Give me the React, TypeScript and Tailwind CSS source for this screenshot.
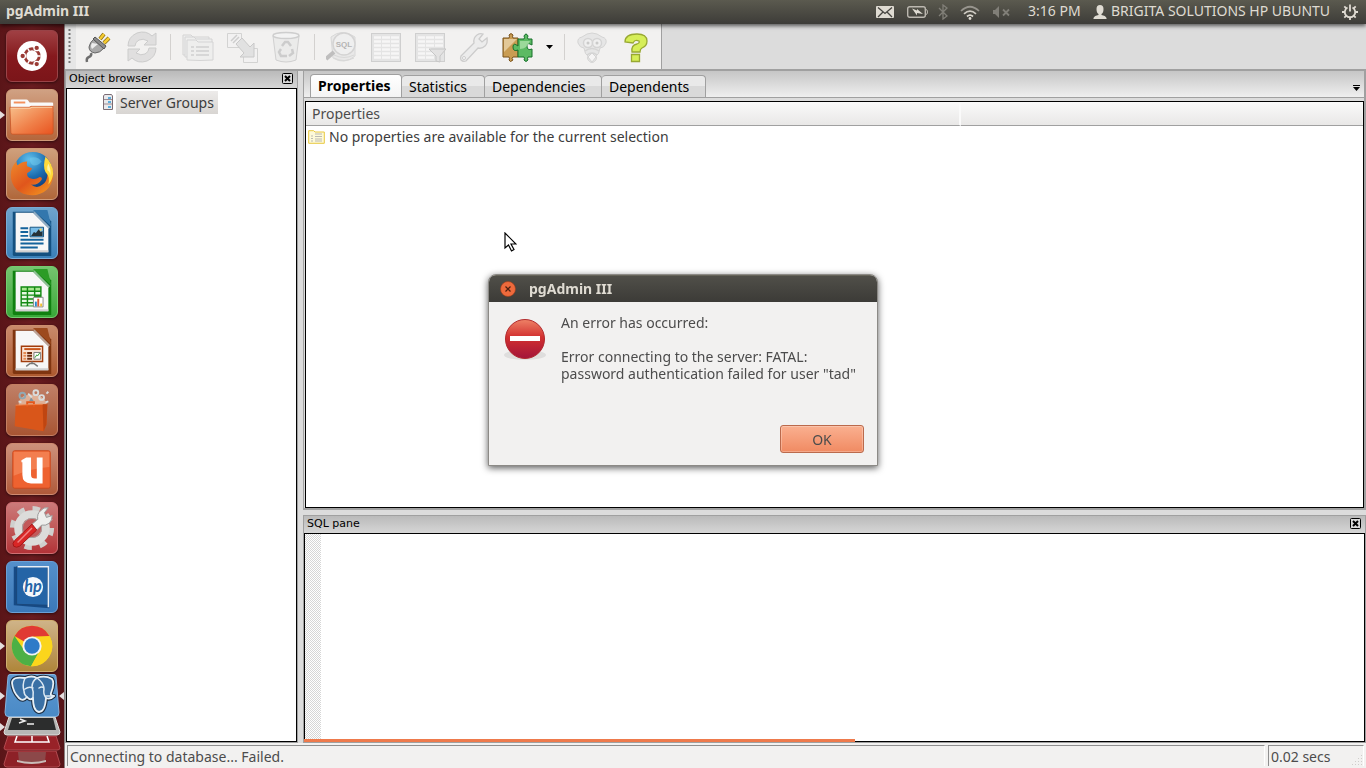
import React from 'react';
import clsx from 'clsx';

const tabs = [
  { label: 'Properties', width: 'w-[92px]' },
  { label: 'Statistics', width: 'w-[83px]' },
  { label: 'Dependencies', width: 'w-[117px]' },
  { label: 'Dependents', width: 'w-[104px]' },
];

function UbuntuLogo() {
  return (
    <svg viewBox="0 0 52 52" className="size-full">
      <circle cx="26" cy="26" r="15.500" fill="#fff" />
      <circle cx="26" cy="26" r="7.500" fill="none" stroke="#9a3a34" strokeWidth="3" />
      <path d="M26 26L35 26M26 26L21.500 18M26 26L21.500 34" stroke="#fff" strokeWidth="1.500" />
      <circle cx="26" cy="26" r="5" fill="#fff" />
      <g fill="#9a3a34" stroke="#fff" strokeWidth="1.300">
        <circle cx="16.300" cy="26" r="2.900" />
        <circle cx="30.900" cy="17.600" r="2.900" />
        <circle cx="30.900" cy="34.400" r="2.900" />
      </g>
    </svg>
  );
}

function FilesIcon() {
  return (
    <svg viewBox="0 0 52 52" className="size-full">
      <defs>
        <linearGradient id="folder" x1="0" y1="0" x2="1" y2="1">
          <stop offset="0" stopColor="#f8c08c" />
          <stop offset=".55" stopColor="#f0814a" />
          <stop offset="1" stopColor="#e8531f" />
        </linearGradient>
      </defs>
      <path d="M4 11q0-1 1-1h15q1.500 0 2 1l1.500 2H47q1 0 1 1v9H4z" fill="#fafafa" />
      <path d="M7 12h12v2H7z" fill="#f3905c" />
      <path d="M3 18h20l2-1h23v27q0 2-2 2H6q-2 0-2-2z" fill="url(#folder)" stroke="#c95222" strokeWidth=".8" />
      <path d="M4 19h20l2-1h21" fill="none" stroke="#fbd0a8" strokeWidth="1" />
    </svg>
  );
}

function FirefoxIcon() {
  return (
    <svg viewBox="0 0 52 52" className="size-full">
      <defs>
        <radialGradient id="globe" cx=".4" cy=".2" r=".9">
          <stop offset="0" stopColor="#5fc0ec" />
          <stop offset=".5" stopColor="#1c6db0" />
          <stop offset="1" stopColor="#0b2c66" />
        </radialGradient>
        <linearGradient id="fox" x1="0" y1="0" x2="1" y2="1">
          <stop offset="0" stopColor="#ee8a2c" />
          <stop offset=".5" stopColor="#e0561c" />
          <stop offset="1" stopColor="#f6a021" />
        </linearGradient>
      </defs>
      <circle cx="27" cy="23" r="20" fill="url(#globe)" />
      <path d="M24 9q8-2 12 4q-4 5-9 4q-4-3-3-8z" fill="#76cdf0" opacity=".5" />
      <path d="M41 12q7 7 7 16c-1 12-10 20-22 20C13 48 4 39 4 27q0-9 6-14q0 3 1 4q4-4 10-4q-1 3 0 5l5 2q0 2-5 5q-1 5 5 6q4 1 8-2q3 0 2 3q-4 6-11 5q6 5 12 0c6-4 6-12 4-25z" fill="url(#fox)" />
      <path d="M40 8q8 7 8 18q-1 7-5 11q2-8-3-13q-3-6 0-16z" fill="#ffd93b" />
      <path d="M43 15q3 6 2 13q0-5-3-6q-1-3 1-7z" fill="#fff3a0" />
    </svg>
  );
}

function DocumentShape({ edge, fold }: { edge: string; fold: string }) {
  return (
    <>
      <path d="M6 4h31l9 10v36H8q-2 0-2-2z" fill={edge} />
      <path d="M27 2h15l4 17z" fill={fold} />
      <path d="M9 5h18l16 16v25H9z" fill="#f7f7f7" />
      <path d="M9 46h34v-2H9z" fill="#d0d0d0" />
      <path d="M27 5l16 16l2-1L29 4z" fill="#e6edf2" opacity=".6" />
    </>
  );
}

function WriterIcon() {
  return (
    <svg viewBox="0 0 52 52" className="size-full">
      <DocumentShape edge="#14507f" fold="#3377ad" />
      <path d="M14 21h8M14 25h8M14 29h8M14 33h24M14 37h24M14 41h18" stroke="#14639c" strokeWidth="2" />
      <path d="M24 20h14v10H24z" fill="#79bde8" stroke="#15537f" />
      <path d="M25 29l3-4l2 1l3-4l2 3l2-1v5z" fill="#263238" />
      <circle cx="35" cy="22.500" r="1.200" fill="#f7d154" />
    </svg>
  );
}

function CalcIcon() {
  return (
    <svg viewBox="0 0 52 52" className="size-full">
      <DocumentShape edge="#108010" fold="#2b9c26" />
      <path d="M14 20h22v21H14z" fill="#138a13" />
      <g fill="#e8f8e4">
        <path d="M15.500 21.500h5v3h-5zM22 21.500h6v3h-6zM29.500 21.500h5v3h-5z" fill="#a8e890" />
        <path d="M15.500 26h5v2.500h-5zM22 26h6v2.500h-6zM29.500 26h5v2.500h-5zM15.500 30h5v2.500h-5zM22 30h6v2.500h-6zM15.500 34h5v2.500h-5zM22 34h6v2.500h-6zM15.500 38h5v2h-5zM22 38h6v2h-6z" />
      </g>
      <path d="M27.500 31.500h10v10h-10z" fill="#fff" stroke="#888" />
      <path d="M29 36h2v5h-2z" fill="#2a88cc" />
      <path d="M31.500 33h2v8h-2z" fill="#e05c30" />
      <path d="M34.500 38h2v3h-2z" fill="#f1c232" />
    </svg>
  );
}

function ImpressIcon() {
  return (
    <svg viewBox="0 0 52 52" className="size-full">
      <DocumentShape edge="#7f3510" fold="#9d4a1e" />
      <path d="M15 21h22v16H15z" fill="#fbe6d8" stroke="#a13c0c" strokeWidth="1.500" />
      <path d="M18 24h17" stroke="#c9571c" strokeWidth="2" />
      <path d="M17 28h3M17 31h3M17 34h3" stroke="#e58a52" strokeWidth="2" />
      <path d="M21 28h5M21 31h5M21 34h5" stroke="#6e2a0c" strokeWidth="2" />
      <path d="M28 27.500h7v7h-7z" fill="#fff" stroke="#777" />
      <path d="M29 33l2-3l1 1l2-3" fill="none" stroke="#2f9c2f" />
      <path d="M26 37v2M20 42l4-3h4l4 3" fill="none" stroke="#777" strokeWidth="1.500" />
    </svg>
  );
}

function SoftwareCenterIcon() {
  return (
    <svg viewBox="0 0 52 52" className="size-full">
      <path d="M12 22q0-12 14-12q13 0 16 12z" fill="#ffe2c8" opacity=".55" />
      <g fill="none" stroke="#d8dcdc" strokeWidth="2">
        <circle cx="16" cy="11" r="3" stroke="#92a9b3" />
        <circle cx="30" cy="8" r="2.500" />
        <circle cx="36" cy="13" r="2.500" />
        <path d="M22 9l4 4M41 9l2-2M12 17l3 1M40 18l3-1" />
      </g>
      <path d="M25 13l3 4h-5z" fill="#7e929c" />
      <path d="M9 21l33-1l-1 21l-3 7l-30-5z" fill="#d9561a" />
      <path d="M37 20h5l-1 21l-3 7z" fill="#bf4511" />
      <path d="M21 23v-5h7v5" fill="none" stroke="#e4571b" strokeWidth="2" />
      <path d="M9 21l28-1" stroke="#f08046" />
    </svg>
  );
}

function UbuntuOneIcon() {
  return (
    <svg viewBox="0 0 52 52" className="size-full">
      <rect x="6" y="7" width="39" height="39" rx="2" fill="#ee6230" stroke="#c9491e" />
      <path d="M7 8h37v16q-18 1-37 9z" fill="#f58a5c" opacity=".7" />
      <path d="M15 17l5-3h5v18q0 4 4 4h2V14h6v27H25q-9 0-9-9V19h-1z" fill="#fff" />
    </svg>
  );
}

function SettingsIcon() {
  return (
    <svg viewBox="0 0 52 52" className="size-full">
      <circle cx="26" cy="26" r="20" fill="none" stroke="#cfcfcd" strokeWidth="6" strokeDasharray="7.500 8.200" />
      <circle cx="26" cy="26" r="14.500" fill="none" stroke="#dcdcda" strokeWidth="8" />
      <circle cx="26" cy="26" r="10" fill="#c2595a" stroke="#a6a6a4" />
      <path d="M26 22l6-5q-1-6 3-9q3-4 8-3l-4 5l2 5l6-2q0 5-3 8q-4 3-8 2l-6 6z" fill="#eeeeec" stroke="#999" />
      <path d="M26 22l5 6L13 45q-3 2-6 0q-2-3 1-6z" fill="#d92626" stroke="#a51515" />
      <path d="M11 41l15-15" stroke="#f28383" strokeWidth="1.500" />
    </svg>
  );
}

function HpIcon() {
  return (
    <svg viewBox="0 0 52 52" className="size-full">
      <path d="M7 5h36l1 43l-37-3z" fill="#164a85" />
      <path d="M10 5h32l1 40l-33-1z" fill="#2464a6" stroke="#1a477a" />
      <path d="M11 5h32v42" fill="none" stroke="#e7eef5" strokeWidth="1.500" />
      <circle cx="27" cy="26" r="10.500" fill="#f5f8fb" />
      <text x="27" y="31" textAnchor="middle" fontSize="17" fontStyle="italic" fontWeight="bold" fill="#2464a6" fontFamily="Lato, sans-serif">hp</text>
    </svg>
  );
}

function ChromeIcon() {
  return (
    <svg viewBox="0 0 52 52" className="size-full">
      <circle cx="26" cy="26" r="21" fill="#fbd51c" />
      <path d="M26 26L7.800 15.500A21 21 0 0 1 44.200 15.500L26 17z" fill="#e03a34" />
      <path d="M7.800 15.500A21 21 0 0 0 25 47L34 31L26 26L17 29z" fill="#4db045" />
      <path d="M26 16h18.500A21 21 0 0 1 25 47l9-16z" fill="#fbd51c" />
      <circle cx="26" cy="26" r="10" fill="#f4f4f2" />
      <circle cx="26" cy="26" r="8" fill="#2e7bc8" />
    </svg>
  );
}

const launcherItems = [
  { name: 'Dash home', icon: UbuntuLogo, tile: 'bg-linear-to-b from-[#a04044] via-[#86191d] to-[#7b1519] border-[#9a4448]', running: false },
  { name: 'Files', icon: FilesIcon, tile: 'bg-linear-to-b from-[#d0a183] to-[#b5663b] border-[#cf9a78]', running: true },
  { name: 'Firefox', icon: FirefoxIcon, tile: 'bg-linear-to-b from-[#cfa07c] to-[#b0673a] border-[#cf9a78]', running: false },
  { name: 'LibreOffice Writer', icon: WriterIcon, tile: 'bg-linear-to-b from-[#6fa4cc] to-[#3a80b8] border-[#79acd6]', running: false },
  { name: 'LibreOffice Calc', icon: CalcIcon, tile: 'bg-linear-to-b from-[#75c46f] to-[#38a838] border-[#74cd6f]', running: false },
  { name: 'LibreOffice Impress', icon: ImpressIcon, tile: 'bg-linear-to-b from-[#c98a6b] to-[#ad5a2f] border-[#cd8e6e]', running: false },
  { name: 'Ubuntu Software Center', icon: SoftwareCenterIcon, tile: 'bg-linear-to-b from-[#c08067] to-[#a85533] border-[#c47f62]', running: false },
  { name: 'Ubuntu One', icon: UbuntuOneIcon, tile: 'bg-linear-to-b from-[#cd917c] to-[#b05a3a] border-[#cf8a70]', running: false },
  { name: 'System Settings', icon: SettingsIcon, tile: 'bg-linear-to-b from-[#cc7a7a] to-[#b33338] border-[#cf6f72]', running: false },
  { name: 'HP Device Manager', icon: HpIcon, tile: 'bg-linear-to-b from-[#5590cb] to-[#3b78b8] border-[#6aa0d6]', running: false },
  { name: 'Chrome', icon: ChromeIcon, tile: 'bg-linear-to-b from-[#cfb388] to-[#af8639] border-[#d0ae70]', running: true },
];

function RunningMark({ side = 'left' }: { side?: 'left' | 'right' }) {
  return (
    <svg viewBox="0 0 5 8" className={clsx('absolute top-1/2 h-2 w-[5px] -translate-y-1/2', side === 'left' ? 'left-0' : 'right-0')}>
      <path d={side === 'left' ? 'M0 0l5 4l-5 4z' : 'M5 0l-5 4l5 4z'} fill="#e4dede" />
    </svg>
  );
}

function FoldedItems() {
  return (
    <div className="mt-0.5 flex flex-col">
      <button aria-label="pgAdmin III" className="relative block">
        <svg viewBox="0 0 64 43" className="block w-full">
          <defs>
            <linearGradient id="pgTile" x1="0" y1="0" x2="0" y2="1">
              <stop offset="0" stopColor="#5c97d0" />
              <stop offset="1" stopColor="#4a8ac6" />
            </linearGradient>
          </defs>
          <path d="M10 .5h44q2 0 2 2l3 36q0 4-3 4H8q-3 0-3-4l3-36q0-2 2-2z" fill="url(#pgTile)" stroke="#86b4de" />
          <g strokeLinejoin="round" strokeLinecap="round">
            <path d="M25 4q7-3 12 0q8-3 15 1q3 4-1 14q-1 3 3 3q-4 4-8 2q-1 14-7 14q-6-1-6-14q-3 3-6-1q-4 5-8 1q-6-6-7-15q0-7 13-5z" fill="#336fa6" stroke="#1d2e42" strokeWidth="4" />
            <path d="M25 4q7-3 12 0q8-3 15 1q3 4-1 14q-1 3 3 3q-4 4-8 2q-1 14-7 14q-6-1-6-14q-3 3-6-1q-4 5-8 1q-6-6-7-15q0-7 13-5z" fill="#3a70a5" stroke="#e8f0f6" strokeWidth="1.800" />
            <path d="M25 4q-3 7-1 13q0 4 3 6M37 4q-5 3-5 9q2 5 1 11M37 4q7 5 7 11q-1 5 2 9M25 15q4-3 8-1M39 14q3-2 5 0M46 22h8" fill="none" stroke="#dce8f2" strokeWidth="1.500" />
          </g>
        </svg>
        <RunningMark />
        <RunningMark side="right" />
      </button>
      <button aria-label="Terminal" className="relative block">
        <svg viewBox="0 0 64 19" className="block w-full">
          <path d="M9 0h46l5 15q0 3-3 3H7q-3 0-3-3z" fill="#b7b7b5" stroke="#dededc" />
          <path d="M12 1h41l3 12H8z" fill="#2c2d2d" />
          <path d="M20 2l5 2l-6 2M27 7h7" fill="none" stroke="#eee" strokeWidth="1.500" />
        </svg>
        <RunningMark />
      </button>
      <button aria-label="Workspace switcher" className="block">
        <svg viewBox="0 0 64 15" className="block w-full">
          <path d="M8 0h48l4 12q0 2-3 2H7q-3 0-3-2z" fill="#982228" stroke="#b34a50" />
          <path d="M17 0l-2 6h34l-2-6M32 0v6" fill="none" stroke="#fff" strokeWidth="1.500" />
        </svg>
      </button>
      <button aria-label="Trash" className="block">
        <svg viewBox="0 0 64 20" className="block w-full">
          <path d="M8 0h48l4 13q0 3-3 3H7q-3 0-3-3z" fill="#8d2127" stroke="#b34a50" />
          <path d="M18 1h28l-1 10H19z" fill="#8c5a58" opacity=".7" />
          <path d="M17 9q15 4 29 0v2q-14 4-29 0z" fill="#c9bcb8" />
        </svg>
      </button>
    </div>
  );
}

function Launcher() {
  return (
    <nav aria-label="Launcher" className="flex w-[65px] shrink-0 flex-col overflow-hidden border-r border-[#8a8080] bg-linear-to-r from-[#5a1518] via-[#6b1c20] to-[#551417] pt-1.5">
      <div className="flex flex-col gap-[7px]">
        {launcherItems.map(({ name, icon: Icon, tile, running }) => (
          <div key={name} className="relative flex justify-center">
            {running && <RunningMark />}
            <button aria-label={name} className={clsx('size-[52px] rounded-md border shadow-[0_1px_3px_rgba(0,0,0,0.5)]', tile)}>
              <Icon />
            </button>
          </div>
        ))}
      </div>
      <FoldedItems />
    </nav>
  );
}

function TopBar() {
  return (
    <header className="z-10 flex h-6 shrink-0 items-center justify-between bg-linear-to-b from-[#5b5a4f] to-[#3d3c38] pr-2 pl-1.5 text-[14px] leading-5 text-[#dfdbd2] shadow-[0_2px_4px_rgba(0,0,0,0.6)]">
      <h1 className="pb-0.5 font-bold">pgAdmin III</h1>
      <div className="flex items-center">
        <svg viewBox="0 0 18 12" className="h-3 w-[18px]">
          <rect width="18" height="12" rx="1" fill="#dfdbd2" />
          <path d="M2 1.500l7 6l7-6M2 11l5-5M16 11l-5-5" fill="none" stroke="#45443f" strokeWidth="1.300" />
        </svg>
        <svg viewBox="0 0 21 12" className="ml-[13px] h-3 w-[21px]">
          <rect x=".7" y=".7" width="17.600" height="10.600" rx="2" fill="none" stroke="#bcb8b0" strokeWidth="1.400" />
          <path d="M19 3.500q1.500 0 1.500 2.500t-1.500 2.500" fill="none" stroke="#bcb8b0" />
          <path d="M5 2.500l5 2V3l6 5l-6-1v2.500z" fill="#dfdbd2" />
        </svg>
        <svg viewBox="0 0 10 16" className="ml-[10px] h-4 w-[10px]">
          <path d="M1 4l8 8l-4 3V1l4 3l-8 8" fill="none" stroke="#817f78" strokeWidth="1.300" />
        </svg>
        <svg viewBox="0 0 20 15" className="ml-3 h-[15px] w-5">
          <g fill="none" strokeWidth="1.700">
            <path d="M1 6q9-8.500 18 0" stroke="#98958e" />
            <path d="M4 8.800q6-5.500 12 0" stroke="#cfcbc3" />
            <path d="M7 11.500q3-2.700 6 0" stroke="#dfdbd2" />
          </g>
          <circle cx="10" cy="13.500" r="1.400" fill="#dfdbd2" />
        </svg>
        <svg viewBox="0 0 18 12" className="ml-3 h-3 w-[18px]">
          <path d="M1 4h2l4-4v12l-4-4H1z" fill="#817f78" />
          <path d="M11 3.500l6 6M17 3.500l-6 6" stroke="#817f78" strokeWidth="1.800" />
        </svg>
        <time className="ml-[18px] w-[53px] pb-0.5 whitespace-nowrap">3:16 PM</time>
        <svg viewBox="0 0 14 14" className="ml-3 size-[14px]">
          <path d="M3.500 4q0-4 3.500-4t3.500 4q0 4-2 5v1q4 .500 5 3v1h-13v-1q1-2.500 5-3v-1q-2-1-2-5z" fill="#dfdbd2" />
        </svg>
        <span className="ml-1 w-[219px] pb-0.5 whitespace-nowrap">BRIGITA SOLUTIONS HP UBUNTU</span>
        <svg viewBox="0 0 16 16" className="ml-3 size-4">
          <path d="M5.500 3.500a5.200 5.200 0 1 0 5 0" fill="none" stroke="#dfdbd2" strokeWidth="1.800" />
          <path d="M8 .5v7" stroke="#dfdbd2" strokeWidth="1.800" />
          <path d="M8 13v3M0 8h3M13 8h3M2.300 2.300l2 2M13.700 2.300l-2 2M2.300 13.700l2-2M13.700 13.700l-2-2" stroke="#dfdbd2" strokeWidth="1.800" />
        </svg>
      </div>
    </header>
  );
}

function ToolButton({ label, disabled = false, children }: { label: string; disabled?: boolean; children: React.ReactNode }) {
  return (
    <button aria-label={label} disabled={disabled} className="flex h-full w-11 items-center justify-center disabled:opacity-75">
      <svg viewBox="0 0 32 32" className="size-8">{children}</svg>
    </button>
  );
}

function ToolSeparator() {
  return (
    <div className="flex w-3 justify-center">
      <div className="h-[26px] w-px bg-[#d3d1cf]" />
    </div>
  );
}

function Toolbar() {
  return (
    <div className="flex h-[45px] shrink-0 bg-[#dcdcdc]">
      <div role="toolbar" className="flex items-center border-r border-[#a0a0a0] bg-[#f2f1f0] pr-[3px]">
        <div className="flex h-full w-[11px] items-center justify-center bg-[#e6e6e6] pr-0.5">
          <svg viewBox="0 0 3 36" className="h-9 w-[3px]">
            <path d="M1.500 0v36" stroke="#777" strokeWidth="2" strokeDasharray="2 2" />
          </svg>
        </div>
        <ToolButton label="Add connection">
          <path d="M5 31q-1-4 2-5t2-4" fill="none" stroke="#6e6e6e" strokeWidth="2.500" />
          <path d="M18 8l4-5M22 12l5-5" stroke="#8a6d10" strokeWidth="4" />
          <path d="M18 8l4-5M22 12l5-5" stroke="#f5cb30" strokeWidth="2.500" />
          <path d="M12 8l10 9q-4 5-9 5q-6-1-6-6q1-5 5-8z" fill="#a9a9a9" stroke="#666" />
          <path d="M10 12q-2 3 0 6l6-5z" fill="#ededed" />
          <path d="M13 6l11 9l-2 3l-11-10z" fill="#8b8b8b" stroke="#555" />
        </ToolButton>
        <ToolButton label="Refresh" disabled>
          <g fill="#dadada" stroke="#c0c0c0">
            <path d="M2 15q0-9 9-13q9-3 15 3l4-3v12H18l4-4q-5-3-9-1q-4 2-4 6z" />
            <path d="M30 17q0 9-9 13q-9 3-15-3l-4 3V18h12l-4 4q5 3 9 1q4-2 4-6z" />
          </g>
        </ToolButton>
        <ToolSeparator />
        <ToolButton label="Object properties" disabled>
          <g fill="#ededed" stroke="#cbcbcb">
            <path d="M1 6V4h8l2 2h16v18H1z" />
            <path d="M3 8V6h9l2 2h16v18H3z" />
            <path d="M5 11V9h9l2 2h15v18q-13 1-26 0z" />
          </g>
          <path d="M9 16h3M14 16h13M9 20h3M14 20h13M9 24h3M14 24h13" stroke="#c5c5c5" strokeWidth="1.500" />
        </ToolButton>
        <ToolButton label="Create object" disabled>
          <path d="M1.500 2.500h14v14h-14zM17.500 17.500h14v14h-14z" fill="#f2f2f2" stroke="#c9c9c9" />
          <path d="M10 13l6-6l8 9l4-4v14H14l4-4z" fill="#dcdcdc" stroke="#bcbcbc" />
          <path d="M5 10l6-6M7 12l6-6" stroke="#c2c2c2" strokeWidth="1.500" />
        </ToolButton>
        <ToolButton label="Drop object" disabled>
          <path d="M3 5l3 24q10 4 20 0l3-24z" fill="#e9e9e9" stroke="#c6c6c6" />
          <ellipse cx="16" cy="4.500" rx="13" ry="3" fill="#f4f4f4" stroke="#c3c3c3" strokeWidth="1.500" />
          <g fill="none" stroke="#c0c0c0" strokeWidth="2.500">
            <path d="M12 15l3-4h3l3 4M22 18l1 4l-4 3M17 25h-6l-2-4l2-3" />
          </g>
        </ToolButton>
        <ToolSeparator />
        <ToolButton label="SQL query" disabled>
          <path d="M5 6q11-9 24 0v19q-11 9-22 2z" fill="#e6e6e6" stroke="#d0d0d0" />
          <path d="M8 24q10 5 20 0M8 27q10 5 20 0" fill="none" stroke="#d0d0d0" />
          <circle cx="18" cy="13" r="11" fill="#efefef" stroke="#cacaca" strokeWidth="1.500" />
          <path d="M8 21l-8 7" stroke="#aeaeae" strokeWidth="4" />
          <text x="18" y="16" textAnchor="middle" fontSize="8" fontWeight="bold" fill="#a0a0a0" fontFamily="Liberation Sans, sans-serif">SQL</text>
        </ToolButton>
        <ToolButton label="View data" disabled>
          <rect x="1.500" y="2.500" width="29" height="28" fill="#e0e0e0" stroke="#c4c4c4" />
          <path d="M4 6.500h7M12 6.500h8M21 6.500h8M4 10.500h7M12 10.500h8M21 10.500h8M4 14.500h7M12 14.500h8M21 14.500h8M4 18.500h7M12 18.500h8M21 18.500h8M4 22.500h7M12 22.500h8M21 22.500h8M4 26.500h7M12 26.500h8M21 26.500h8" stroke="#f8f8f8" strokeWidth="2.500" />
        </ToolButton>
        <ToolButton label="View filtered data" disabled>
          <rect x="1.500" y="2.500" width="29" height="28" fill="#e0e0e0" stroke="#c4c4c4" />
          <path d="M4 6.500h7M12 6.500h8M21 6.500h8M4 10.500h7M12 10.500h8M21 10.500h8M4 14.500h7M12 14.500h8M21 14.500h8M4 18.500h7M12 18.500h5M4 22.500h7M12 22.500h8M4 26.500h7M12 26.500h8" stroke="#f8f8f8" strokeWidth="2.500" />
          <path d="M15 18h17l-6 7v6l-4-1v-5z" fill="#dedede" stroke="#b8b8b8" />
        </ToolButton>
        <ToolButton label="Maintain" disabled>
          <path d="M3 25l13-13q-1-5 3-8q3-2 6-1l-4 5l3 3l5-4q1 5-2 8q-3 3-7 2L8 30q-3 1-5-1q-1-2 0-4z" fill="#ebebeb" stroke="#c0c0c0" strokeWidth="1.300" />
          <circle cx="6" cy="27" r="1.500" fill="#fff" stroke="#c0c0c0" />
        </ToolButton>
        <ToolButton label="Plugins">
          <path d="M1 7h6q1-1 0-3q2-3 4 0q-1 2 0 3h5v7q4-2 4 2q0 5-4 3v7h-5q-2 1 0 3q-3 3-4 0q1-2 0-3H1z" fill="#c99c52" stroke="#785018" />
          <path d="M2 8h13l-13 13z" fill="#f5e6c6" opacity=".6" />
          <path d="M16 8h6q1-1 0-3q2-4 4 0q-1 2 0 3h4v6q-5-3-5 1q0 5 5 3v8h-4q-1 1 0 3q-2 3-4 0q1-2 0-3h-6v-7q-5 2-5-3t5-1z" fill="#5cba63" stroke="#16702b" />
          <path d="M18 10h10q-3 8-10 8z" fill="#c4efbf" opacity=".6" />
        </ToolButton>
        <button aria-label="Plugin menu" className="flex h-full w-[18px] items-center justify-center">
          <svg viewBox="0 0 7 4" className="h-1 w-[7px]"><path d="M0 0h7L3.500 4z" /></svg>
        </button>
        <ToolSeparator />
        <ToolButton label="Guru hint" disabled>
          <g fill="#e3e3e3" stroke="#cbcbcb">
            <path d="M6 6q10-8 20 0q5 1 4 6q-2 5-6 5q-1 7-4 8q2 4-4 7q-6-3-4-7q-3-1-4-8q-4 0-6-5q-1-5 4-6z" />
            <circle cx="12" cy="12" r="4.500" fill="#efefef" strokeWidth="1.500" />
            <circle cx="21" cy="12" r="4.500" fill="#efefef" strokeWidth="1.500" />
            <path d="M9 20q7-5 14 0M11 24q5-4 10 0" fill="none" strokeWidth="1.500" />
            <path d="M16 22l4 4l-4 5l-4-5z" fill="#f6f6f6" />
          </g>
          <circle cx="12" cy="12" r="1.500" fill="#bdbdbd" />
          <circle cx="21" cy="12" r="1.500" fill="#bdbdbd" />
        </ToolButton>
        <ToolButton label="Help">
          <path d="M5 11q0-8 12-8q10 0 10 7q0 5-5 7q-2 1-2 4h-8q-1-7 5-8q3-1 2-3q-4-2-6 2z" fill="#d6ee58" stroke="#98a832" strokeWidth="1.300" />
          <path d="M11.500 23.500h8v7h-8z" fill="#d6ee58" stroke="#98a832" strokeWidth="1.300" />
        </ToolButton>
      </div>
    </div>
  );
}

function PaneCaption({ title }: { title: string }) {
  return (
    <div className="flex h-[17px] shrink-0 items-center justify-between bg-linear-to-b from-[#bababa] to-[#d6d6d6] pr-1 pb-0.5 pl-[3px]">
      <h2 className="font-['DejaVu_Sans',sans-serif] text-[11px] leading-none text-black">{title}</h2>
      <button aria-label={`Close ${title}`}>
        <svg viewBox="0 0 11 11" className="block size-[11px]">
          <rect x=".5" y=".5" width="10" height="10" rx="1" fill="#d8d8d8" stroke="#000" />
          <path d="M3 3l5 5M8 3l-5 5" stroke="#000" strokeWidth="2" />
        </svg>
      </button>
    </div>
  );
}

function ServerIcon() {
  return (
    <svg viewBox="0 0 12 16" className="h-4 w-3">
      <path d="M1.500 2l1-1.500h7l1 1.500v13.500h-9z" fill="#e9e9ec" stroke="#7b6c74" />
      <path d="M2 5.500h8M2 10h8" stroke="#9b8c94" />
      <path d="M6 4h3M6 8h3M6 13h3" stroke="#2f9bd6" strokeWidth="1.500" />
    </svg>
  );
}

function ObjectBrowser() {
  return (
    <aside className="flex w-[233px] shrink-0 flex-col border-r border-b border-l border-[#a0a0a0]">
      <PaneCaption title="Object browser" />
      <div className="flex-1 border border-black bg-white pt-0.5">
        <ul role="tree">
          <li role="treeitem" aria-selected="true" className="flex items-start gap-0.5 pl-[35px]">
            <span className="pt-[3px]"><ServerIcon /></span>
            <span className="w-[102px] bg-linear-to-b from-[#edebea] to-[#d8d5d2] pl-1 text-[14px] leading-[23px] whitespace-nowrap text-[#3c3c3c]">Server Groups</span>
          </li>
        </ul>
      </div>
    </aside>
  );
}

function PropertiesNotebook() {
  return (
    <section className="flex min-h-0 flex-1 flex-col border-r-2 border-b-2 border-l border-[#a0a0a0] bg-[#dcdcdc]">
      <div role="tablist" className="flex h-[27px] shrink-0 items-end border-b border-[#a0a0a0] bg-linear-to-b from-[#c6c6c6] to-[#efefef] pl-1.5">
        {tabs.map((tab, idx) => (
          <button
            key={tab.label}
            role="tab"
            aria-selected={idx === 0}
            className={clsx(
              'rounded-t-sm border-t border-r border-[#a0a0a0] pl-[7px] text-left text-[14px] text-black',
              tab.width,
              idx === 0 ? 'h-[23px] border-l bg-linear-to-b from-white to-[#f4f4f4] leading-[22px] font-bold' : 'h-[22px] bg-linear-to-b from-[#e9e9e9] from-50% to-[#d9d9d9] to-50% leading-5',
            )}
          >
            {tab.label}
          </button>
        ))}
        <button aria-label="List tabs" className="mr-1 mb-1.5 ml-auto">
          <svg viewBox="0 0 7 6" className="block h-1.5 w-[7px]"><path d="M0 0h7v1H0zM0 2h7L3.500 6z" /></svg>
        </button>
      </div>
      <div className="mt-[3px] ml-px flex-1 border border-black bg-white">
        <table className="w-full table-fixed border-separate border-spacing-0 text-left text-[14px] text-[#4c4c4c]">
          <thead>
            <tr className="bg-linear-to-b from-[#fafafa] to-[#e8e7e6]">
              <th className="w-[62%] border-r-2 border-b border-r-[#fafafa] border-b-[#a0a0a0] p-0 pl-1.5 leading-[23px] font-normal">Properties</th>
              <th className="border-b border-[#a0a0a0] p-0" />
            </tr>
          </thead>
          <tbody>
            <tr>
              <td className="p-0 text-[#3c3c3c]">
                <div className="flex items-center gap-1 pl-0.5 leading-[22px]">
                  <svg viewBox="0 0 17 14" className="h-[14px] w-[17px]">
                    <path d="M.7 2V.7h5L7 2h9.300v11.300H.7z" fill="#fdf9d8" stroke="#e8c840" />
                    <path d="M3 6h2M7 4h7M3 8.500h2M7 6.500h7M3 11h2M7 9h7M7 11h7" stroke="#a9a9a9" strokeWidth=".8" />
                  </svg>
                  No properties are available for the current selection
                </div>
              </td>
              <td className="p-0" />
            </tr>
          </tbody>
        </table>
      </div>
    </section>
  );
}

function SqlPane() {
  return (
    <section className="flex h-[228px] shrink-0 flex-col border border-[#a0a0a0]">
      <PaneCaption title="SQL pane" />
      <div className="relative flex flex-1 border border-black bg-white">
        <div className="w-4 bg-[repeating-conic-gradient(#d6d6d6_0_25%,#ffffff_0_50%)] bg-[length:2px_2px]" />
        <textarea aria-label="SQL pane" readOnly className="flex-1 resize-none bg-white outline-none" />
        <div className="absolute -bottom-px -left-px h-[3px] w-[52%] bg-[#ee7a4c]" />
      </div>
    </section>
  );
}

function StatusBar() {
  return (
    <footer className="flex h-[25px] shrink-0 gap-[3px] bg-[#f2f1f0] p-0.5 text-[14px] leading-[22px] text-[#4c4c4c]">
      <div className="flex-1 border-t border-r border-l border-t-[#8f8f8f] border-r-white border-l-[#8f8f8f] pl-0.5">Connecting to database... Failed.</div>
      <div className="flex w-24 justify-between border-t border-r border-l border-t-[#8f8f8f] border-r-white border-l-[#8f8f8f] pl-0.5">
        0.02 secs
        <svg viewBox="0 0 12 12" className="size-3 self-end" fill="#cfcdcb">
          <path d="M10 1h1v1h-1zM7 4h1v1H7zM10 4h1v1h-1zM4 7h1v1H4zM7 7h1v1H7zM10 7h1v1h-1zM1 10h1v1H1zM4 10h1v1H4zM7 10h1v1H7zM10 10h1v1h-1z" />
        </svg>
      </div>
    </footer>
  );
}

function ErrorDialog() {
  return (
    <div className="fixed inset-0 z-20 flex items-center justify-center pb-7">
      <div role="alertdialog" aria-labelledby="error-title" className="flex h-[192px] w-[390px] flex-col overflow-hidden rounded-t-lg border border-[#8c8a86] bg-[#f2f1f0] text-[14px] text-[#4c4c4c] shadow-[0_2px_7px_rgba(0,0,0,0.65)]">
        <div className="flex h-[27px] shrink-0 items-center gap-[13px] border-t border-[#67655a] bg-linear-to-b from-[#504f49] to-[#3c3b37] pl-[11px]">
          <button aria-label="Close">
            <svg viewBox="0 0 16 16" className="block size-4">
              <circle cx="8" cy="8" r="7.500" fill="#ee6a3c" stroke="#9d3e1d" strokeWidth=".6" />
              <path d="M5.500 5.500l5 5M10.500 5.500l-5 5" stroke="#4d1f10" strokeWidth="1.200" />
            </svg>
          </button>
          <h2 id="error-title" className="pb-0.5 font-bold text-[#dfdbd2]">pgAdmin III</h2>
        </div>
        <div className="flex flex-1 gap-3.5 pt-3 pl-3.5">
          <svg viewBox="0 0 44 46" className="h-[46px] w-[44px] shrink-0">
            <defs>
              <linearGradient id="stop" x1="0" y1="0" x2="0" y2="1">
                <stop offset="0" stopColor="#ee8266" />
                <stop offset=".45" stopColor="#d23030" />
                <stop offset="1" stopColor="#a3143a" />
              </linearGradient>
            </defs>
            <ellipse cx="22" cy="41" rx="21" ry="5" fill="#000" opacity=".08" />
            <circle cx="22" cy="25" r="19.500" fill="url(#stop)" stroke="#b02a2e" />
            <path d="M7 22h30v5H7z" fill="#fff" />
          </svg>
          <div className="leading-[17px] whitespace-nowrap">
            <p>An error has occurred:</p>
            <p className="mt-[17px]">Error connecting to the server: FATAL:<br />password authentication failed for user "tad"</p>
          </div>
        </div>
        <div className="flex justify-end pr-[13px] pb-3">
          <button className="h-7 w-[84px] rounded-[3px] border border-[#bb6a4c] bg-linear-to-b from-[#fab090] to-[#f08a62] shadow-[inset_0_0_0_1px_rgba(255,255,255,0.25)]">OK</button>
        </div>
      </div>
    </div>
  );
}

export default function App() {
  return (
    <div className="flex h-screen flex-col overflow-hidden bg-[#dcdcdc] font-['Noto_Sans','Open_Sans',sans-serif]">
      <TopBar />
      <div className="flex min-h-0 flex-1">
        <Launcher />
        <main className="flex min-w-0 flex-1 flex-col">
          <Toolbar />
          <div className="flex min-h-0 flex-1 gap-[5px] border-t-2 border-[#a0a0a0]">
            <ObjectBrowser />
            <div className="flex min-w-0 flex-1 flex-col">
              <PropertiesNotebook />
              <div className="h-[5px] shrink-0" />
              <SqlPane />
            </div>
          </div>
          <StatusBar />
        </main>
      </div>
      <ErrorDialog />
      <svg viewBox="0 0 13 20" className="absolute top-[232px] left-[504px] h-5 w-[13px]">
        <path d="M1 1v15l3.500-3l3 6l2.500-1.500l-3-5.500h5z" fill="#fff" stroke="#000" strokeWidth="1.200" />
      </svg>
    </div>
  );
}
